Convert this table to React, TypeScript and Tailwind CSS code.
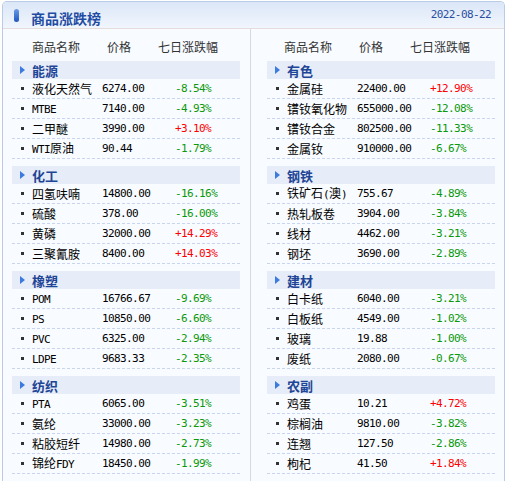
type Row = { name: string; price: string; change: string };
type Group = { title: string; rows: Row[] };

const left: Group[] = [
  {
    title: "能源",
    rows: [
      { name: "液化天然气", price: "6274.00", change: "-8.54%" },
      { name: "MTBE", price: "7140.00", change: "-4.93%" },
      { name: "二甲醚", price: "3990.00", change: "+3.10%" },
      { name: "WTI原油", price: "90.44", change: "-1.79%" },
    ],
  },
  {
    title: "化工",
    rows: [
      { name: "四氢呋喃", price: "14800.00", change: "-16.16%" },
      { name: "硫酸", price: "378.00", change: "-16.00%" },
      { name: "黄磷", price: "32000.00", change: "+14.29%" },
      { name: "三聚氰胺", price: "8400.00", change: "+14.03%" },
    ],
  },
  {
    title: "橡塑",
    rows: [
      { name: "POM", price: "16766.67", change: "-9.69%" },
      { name: "PS", price: "10850.00", change: "-6.60%" },
      { name: "PVC", price: "6325.00", change: "-2.94%" },
      { name: "LDPE", price: "9683.33", change: "-2.35%" },
    ],
  },
  {
    title: "纺织",
    rows: [
      { name: "PTA", price: "6065.00", change: "-3.51%" },
      { name: "氨纶", price: "33000.00", change: "-3.23%" },
      { name: "粘胶短纤", price: "14980.00", change: "-2.73%" },
      { name: "锦纶FDY", price: "18450.00", change: "-1.99%" },
    ],
  },
];

const right: Group[] = [
  {
    title: "有色",
    rows: [
      { name: "金属硅", price: "22400.00", change: "+12.90%" },
      { name: "镨钕氧化物", price: "655000.00", change: "-12.08%" },
      { name: "镨钕合金", price: "802500.00", change: "-11.33%" },
      { name: "金属钕", price: "910000.00", change: "-6.67%" },
    ],
  },
  {
    title: "钢铁",
    rows: [
      { name: "铁矿石(澳)", price: "755.67", change: "-4.89%" },
      { name: "热轧板卷", price: "3904.00", change: "-3.84%" },
      { name: "线材", price: "4462.00", change: "-3.21%" },
      { name: "钢坯", price: "3690.00", change: "-2.89%" },
    ],
  },
  {
    title: "建材",
    rows: [
      { name: "白卡纸", price: "6040.00", change: "-3.21%" },
      { name: "白板纸", price: "4549.00", change: "-1.02%" },
      { name: "玻璃", price: "19.88", change: "-1.00%" },
      { name: "废纸", price: "2080.00", change: "-0.67%" },
    ],
  },
  {
    title: "农副",
    rows: [
      { name: "鸡蛋", price: "10.21", change: "+4.72%" },
      { name: "棕榈油", price: "9810.00", change: "-3.82%" },
      { name: "连翘", price: "127.50", change: "-2.86%" },
      { name: "枸杞", price: "41.50", change: "+1.84%" },
    ],
  },
];

const cjk = "font-['Noto_Sans_CJK_SC',sans-serif]";
const mono = "font-['DejaVu_Sans_Mono','Noto_Sans_CJK_SC',monospace] text-[11px] tracking-[-0.6px]";

// latin runs in names use the narrow mono face, like the original page
function Name({ text }: { text: string }) {
  const parts = text.split(/([A-Za-z()]+)/).filter(Boolean);
  return (
    <>
      {parts.map((p, i) =>
        /^[A-Za-z()]+$/.test(p) ? (
          <span key={i} className={mono}>
            {p}
          </span>
        ) : (
          <span key={i}>{p}</span>
        )
      )}
    </>
  );
}

function Section({ group }: { group: Group }) {
  return (
    <div className="mb-[7px] w-[228px]">
      <div className="flex h-[18px] items-center bg-[#e6edf8]">
        <span className="ml-[8px] h-0 w-0 border-y-[4px] border-l-[5px] border-y-transparent border-l-[#3b7bdf]" />
        <span className="ml-[7px] text-[13px] leading-none font-bold text-[#1f4596]">
          {group.title}
        </span>
      </div>
      {group.rows.map((r) => (
        <div
          key={r.name}
          className="flex h-[20px] items-center border-b border-dashed border-[#c9d5ee] text-[12px] leading-none text-black"
        >
          <span className="ml-[9px] h-[3px] w-[3px] bg-[#333]" />
          <span className="ml-[8px] w-[70px] whitespace-nowrap">
            <Name text={r.name} />
          </span>
          <span className={`w-[73px] whitespace-nowrap ${mono}`}>{r.price}</span>
          <span
            className={`whitespace-nowrap ${mono} ${
              r.change.startsWith("+") ? "text-[#ff0000]" : "text-[#0a990a]"
            }`}
          >
            {r.change}
          </span>
        </div>
      ))}
    </div>
  );
}

function Panel({ groups, headOffset }: { groups: Group[]; headOffset: string }) {
  return (
    <div>
      <div className={`flex h-[20px] items-center text-[12px] text-[#333] ${headOffset}`}>
        <span className="w-[75px]">商品名称</span>
        <span className="w-[51px]">价格</span>
        <span>七日涨跌幅</span>
      </div>
      <div className="mt-[4px]">
        {groups.map((g) => (
          <Section key={g.title} group={g} />
        ))}
      </div>
    </div>
  );
}

export default function App() {
  return (
    <div className={`min-h-[481px] bg-white pt-[1px] ${cjk}`}>
      <div className="ml-[2px] w-[503px] overflow-hidden rounded-t-[5px] border-x border-t border-[#b9cbe6]">
        {/* title bar */}
        <div className="flex h-[27px] items-center border-b border-[#e6dcdc] bg-gradient-to-b from-[#dbe6f7] to-[#f1f6fd]">
          <span className="ml-[11px] h-[13px] w-[5px] rounded-full bg-gradient-to-b from-[#6a9be9] to-[#1f55bf]" />
          <span className="ml-[12px] pt-[6px] text-[14px] leading-none font-bold text-[#1f4ca3]">
            商品涨跌榜
          </span>
          <span className={`ml-auto mr-[13px] text-[#2a4fa0] ${mono}`}>2022-08-22</span>
        </div>

        {/* two columns */}
        <div className="flex bg-[#f8fbff] pt-[8px]">
          <div className="w-[247px] pl-[9px]">
            <Panel groups={left} headOffset="pl-[20px]" />
          </div>
          <div className="-mt-[8px] border-l border-[#d6dbe3] pl-[16px] pt-[8px]">
            <Panel groups={right} headOffset="pl-[17px]" />
          </div>
        </div>
      </div>
    </div>
  );
}
